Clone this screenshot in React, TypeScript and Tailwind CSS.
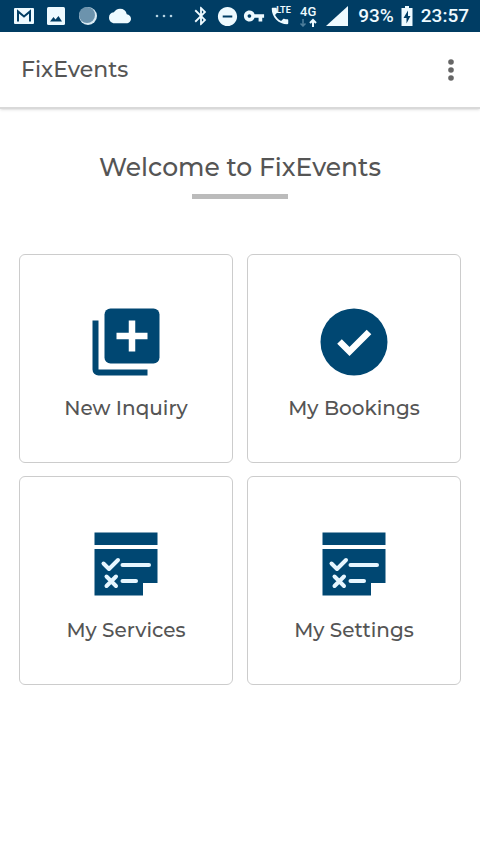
import React from 'react';
import {
  MdBluetooth,
  MdCloud,
  MdDoNotDisturbOn,
  MdImage,
  MdVpnKey,
} from 'react-icons/md';

const StatusBar: React.FC = () => (
  <div className="flex h-8 items-center justify-between bg-[#003d64] pl-[14px] pr-[11px] font-[Roboto,sans-serif] text-[#eefaff]">
    <div className="flex items-center">
      <svg viewBox="0 0 20 16" className="h-4 w-5" aria-hidden="true">
        <rect width="20" height="16" rx="1" fill="currentColor" />
        <path d="M4 13.500V3.500L10 8.500L16 3.500V13.500" fill="none" stroke="#003d64" strokeWidth="2" />
      </svg>
      <svg viewBox="0 0 18 18" className="ml-[13px] h-[18px] w-[18px]" aria-hidden="true">
        <rect width="18" height="18" rx="1.500" fill="currentColor" />
        <path d="M3 14.500L6.500 10L8.500 12.500L11.500 9L15 14.500z" fill="#003d64" />
      </svg>
      <svg viewBox="0 0 20 20" className="ml-[13px] h-5 w-5" aria-hidden="true">
        <circle cx="10" cy="10" r="9" fill="#d9ebf4" />
        <circle cx="9" cy="9" r="8" fill="#6c93ad" />
      </svg>
      <MdCloud className="ml-[11px] h-[22px] w-[22px]" />
      <svg viewBox="0 0 18 4" className="ml-6 h-1 w-[18px]" fill="#b5d3e2" aria-hidden="true">
        <circle cx="2" cy="2" r="1.300" />
        <circle cx="9" cy="2" r="1.300" />
        <circle cx="16" cy="2" r="1.300" />
      </svg>
    </div>
    <div className="flex items-center">
      <MdBluetooth className="h-[22px] w-[22px]" />
      <MdDoNotDisturbOn className="ml-1 h-[23px] w-[23px]" />
      <MdVpnKey className="ml-1 h-[22px] w-[22px]" />
      <span className="relative ml-1 block h-[22px] w-[22px]">
        <svg viewBox="0 0 24 24" className="h-[22px] w-[22px]" fill="currentColor" aria-hidden="true">
          <path d="M20 15.500c-1.250 0-2.450-.2-3.570-.57-.35-.11-.74-.03-1.020.24l-2.200 2.200c-2.830-1.440-5.150-3.750-6.590-6.590l2.200-2.210c.28-.26.36-.65.25-1C8.700 6.450 8.500 5.250 8.500 4c0-.55-.45-1-1-1H4c-.55 0-1 .45-1 1 0 9.390 7.610 17 17 17 .55 0 1-.45 1-1v-3.500c0-.55-.45-1-1-1z" />
        </svg>
        <span className="absolute left-[7px] top-0 text-[9px] font-bold leading-[10px]">LTE</span>
      </span>
      <span className="ml-2 flex w-[18px] flex-col items-center">
        <span className="text-[13px] font-medium leading-3">4G</span>
        <svg viewBox="0 0 18 9" className="h-[9px] w-[18px]" fill="none" strokeWidth="2" aria-hidden="true">
          <path d="M4 1V8M1.500 5.500L4 8L6.500 5.500" stroke="#4f7f9c" strokeWidth="1.500" />
          <path d="M14 9V2M11 5L14 2L17 5" stroke="currentColor" />
        </svg>
      </span>
      <svg viewBox="0 0 22 20" className="ml-[9px] h-5 w-[22px]" fill="currentColor" aria-hidden="true">
        <path d="M0 20L22 0V20z" />
      </svg>
      <span className="ml-[10px] text-[19px] font-medium leading-6">93%</span>
      <svg viewBox="0 0 12 20" className="ml-[7px] h-5 w-3" aria-hidden="true">
        <path d="M4 0H8V2H11.500V20H.5V2H4z" fill="currentColor" />
        <path d="M7 4.500L2.500 12H5.500V17.500L9.500 10H7z" fill="#003d64" />
      </svg>
      <span className="ml-2 text-[19px] font-medium leading-6">23:57</span>
    </div>
  </div>
);

const AddLibraryIcon: React.FC = () => (
  <svg viewBox="0 0 80 80" className="h-20 w-20" aria-hidden="true">
    <rect x="18.500" y="6.500" width="55" height="55" rx="6" fill="currentColor" />
    <path d="M46 18.500V49.500M30.500 34H61.500" stroke="#fff" strokeWidth="6.500" />
    <path d="M6.500 18.500H12.500V67.500H61.500V73.500H12.500A6 6 0 0 1 6.500 67.500z" fill="currentColor" />
  </svg>
);

const CheckCircleIcon: React.FC = () => (
  <svg viewBox="0 0 80 80" className="h-20 w-20" aria-hidden="true">
    <circle cx="40" cy="40" r="33.500" fill="currentColor" />
    <path d="M25.500 39.500L35.500 49.500L55 30" fill="none" stroke="#fff" strokeWidth="6.500" />
  </svg>
);

const ChecklistIcon: React.FC = () => (
  <svg viewBox="0 0 80 80" className="h-20 w-20" aria-hidden="true">
    <path d="M8.500 8.500H71.500V21H8.500zM8.500 25H71.500V59H57V71.500H8.500z" fill="currentColor" />
    <g fill="none" stroke="#e6f6ff" strokeWidth="4" strokeLinecap="round">
      <path d="M17.500 39.500L23 45L32 36" strokeLinejoin="round" />
      <path d="M36.500 41H63" />
      <path d="M20.500 52.500L30 62M30 52.500L20.500 62" />
      <path d="M36.500 57H50" />
    </g>
  </svg>
);

const tiles = [
  { label: 'New Inquiry', icon: <AddLibraryIcon /> },
  { label: 'My Bookings', icon: <CheckCircleIcon /> },
  { label: 'My Services', icon: <ChecklistIcon /> },
  { label: 'My Settings', icon: <ChecklistIcon /> },
];

const App: React.FC = () => {
  return (
    <div className="min-h-screen bg-white font-[Montserrat,Inter,sans-serif] font-medium text-[#555]">
      <StatusBar />
      <header className="flex h-[77px] items-center justify-between border-b-2 border-[#d9d9d9] pl-[21px] pr-[14px] shadow-sm">
        <h1 className="text-[22px] leading-7">FixEvents</h1>
        <button type="button" aria-label="More options" className="text-[#666]">
          <svg viewBox="0 0 30 30" className="h-[30px] w-[30px]" fill="currentColor" aria-hidden="true">
            <circle cx="15" cy="7" r="2.800" />
            <circle cx="15" cy="15" r="2.800" />
            <circle cx="15" cy="23" r="2.800" />
          </svg>
        </button>
      </header>

      <main className="px-[19px] pt-10">
        <h2 className="text-center text-[25px] leading-9">Welcome to FixEvents</h2>
        <div className="mx-auto mt-[9px] h-[5px] w-24 bg-[#bbb]" />

        <div className="mt-[55px] grid grid-cols-2 gap-x-[14px] gap-y-[13px]">
          {tiles.map((tile) => (
            <button
              key={tile.label}
              type="button"
              className="flex flex-col items-center rounded-md border border-[#ccc] pb-10 pt-[47px]"
            >
              <span className="text-[#004772]">{tile.icon}</span>
              <span className="mt-3 text-[20px] leading-7">{tile.label}</span>
            </button>
          ))}
        </div>
      </main>
    </div>
  );
};

export default App;
